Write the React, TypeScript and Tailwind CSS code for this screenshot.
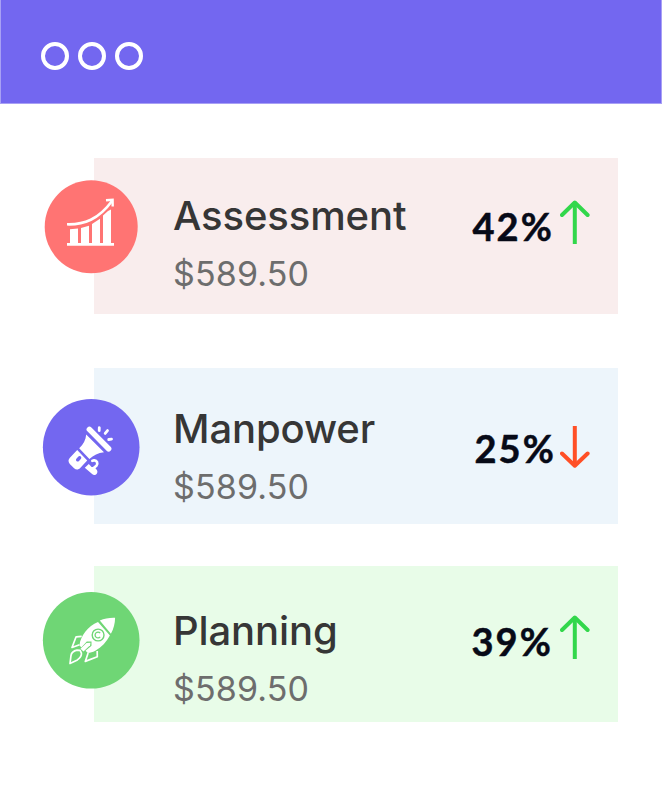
import clsx from 'clsx'
import type { ReactNode } from 'react'

interface Stat {
  name: string
  amount: string
  percent: string
  trend: 'up' | 'down'
  card: string
  body: string
  percentPos: string
  arrowPos: string
  iconPos: string
  icon: ReactNode
}

function ChartIcon() {
  return (
    <svg viewBox="0 0 98 98" className="size-[98px]" fill="none">
      <circle cx="49.2" cy="48.8" r="46.5" fill="#ff7473" />
      <path
        d="M25 65h47v2.8H25zM28 51.2l8-.6V66h-8zM39 50l8-2.3V66h-8zM50 46l8-5.2V66h-8zM61 37.5l5-4.5 3-1.5V66h-8z"
        fill="#fff"
      />
      <path d="M25 46.3C42 46.8 56.5 41.5 70 23" stroke="#fff" strokeWidth="2.6" />
      <path d="M64 22.3l6.6-.6.1 6.7" stroke="#fff" strokeWidth="2.4" />
    </svg>
  )
}

function MegaphoneIcon() {
  return (
    <svg viewBox="0 0 98 98" className="size-[98px]" fill="none">
      <circle cx="49.2" cy="49.2" r="48.3" fill="#7367f0" />
      <path d="M47.4 31.4l19.2 19.4" stroke="#fff" strokeWidth="5.6" strokeLinecap="round" />
      <path
        d="M57.3 29.6l-.1 3M65.5 32.6l-2.3 2.8M66.7 41.5l2.8-.3"
        stroke="#fff"
        strokeWidth="2.8"
        strokeLinecap="round"
      />
      <path d="M44.2 36.6L62 54.2c-6 .5-10.4 3-14.6 6.9L37.2 50.3c4.2-4 6.5-8 7-13.7z" fill="#fff" />
      <path
        fillRule="evenodd"
        d="M35.2 52l10 10.6-7 7.5c-1.8 1.9-4.2 2-6.1.2l-4.3-4.4c-1.8-1.9-1.7-4.3.1-6.1zM34.6 60.4c-1.7 1.7.6 4.3 2.4 2.6l1.8-1.9c1.6-1.7-.8-4.2-2.4-2.5z"
        fill="#fff"
      />
      <path d="M42.8 69.8l4-3.8 2.8 3h2.6l2.1 2.2c3.1 3.3-1 7.7-4.2 4.9z" fill="#fff" />
      <path
        d="M50.4 62.8l1.6-.4c2.8-.4 4.4 3.3 2.4 5.4l-3 2.5"
        stroke="#fff"
        strokeWidth="2.7"
        strokeLinecap="round"
        strokeLinejoin="round"
      />
    </svg>
  )
}

function RocketIcon() {
  return (
    <svg viewBox="0 0 98 98" className="size-[98px]" fill="none">
      <circle cx="49.2" cy="49.3" r="48.3" fill="#6fd675" />
      <path d="M73.1 26.7c-5.5-.2-10.6.6-15.3 2.9l11.1 13.2c2.8-5 4.1-10.4 4.2-16.1z" fill="#fff" />
      <path
        d="M56 31l11.9 13.6c-3.4 6.3-8.2 11.7-14.6 15.2-2.7 1.4-5 2-7.5 2.3l-2.3-2.3 6-5.1V50.600h-4.700l-5.500 6-1.800-2.400c.8-8.800 8.500-19.200 18.500-23.200z"
        fill="#fff"
      />
      <path d="M48.5 51.7l-.4 2.6-6.6 6.2-3-2.8 6-5.7z" fill="#fff" />
      <circle cx="56.1" cy="44" r="5.9" stroke="#6fd675" strokeWidth="1.4" />
      <path d="M58.2 42.1a2.9 2.9 0 1 0 0 3.8" stroke="#6fd675" strokeWidth="1.3" />
      <path
        d="M39.7 45.3l-5.6.5-4.1 10.7 7.5-2.8M55.2 60l.1 5.8-12 4.6 2.8-8.4M35 59.2c-3.6.8-5.6 2.7-6 5.3l-1 8 7.4-3.6c2.6-1.8 4.3-4.2 4-6.8l-1.3-2.7z"
        stroke="#fff"
        strokeWidth="1.7"
        strokeLinejoin="round"
      />
    </svg>
  )
}

function TrendArrow({ trend }: { trend: 'up' | 'down' }) {
  return trend === 'up' ? (
    <svg viewBox="0 0 30 44" className="h-[44px] w-[30px]" fill="none" stroke="#32d74b" strokeWidth="4">
      <path d="M14.8 44V3" />
      <path d="M2 15L14.8 2.5 27.6 15" strokeLinecap="round" strokeLinejoin="round" />
    </svg>
  ) : (
    <svg viewBox="0 0 30 44" className="h-[44px] w-[30px]" fill="none" stroke="#ff4f26" strokeWidth="4">
      <path d="M14.8 0v40" />
      <path d="M2 27.5L14.8 39.7 27.6 27.5" strokeLinecap="round" strokeLinejoin="round" />
    </svg>
  )
}

const stats: Stat[] = [
  {
    name: 'Assessment',
    amount: '$589.50',
    percent: '42%',
    trend: 'up',
    card: 'mt-[54px] bg-[#f9eded]',
    body: 'pt-[34px]',
    percentPos: 'pt-[44px] pr-[6px]',
    arrowPos: 'mt-[42px]',
    iconPos: 'top-[20px]',
    icon: <ChartIcon />,
  },
  {
    name: 'Manpower',
    amount: '$589.50',
    percent: '25%',
    trend: 'down',
    card: 'mt-[54px] bg-[#edf5fb]',
    body: 'pt-[37px]',
    percentPos: 'pt-[56px] pr-[4px]',
    arrowPos: 'mt-[58px]',
    iconPos: 'top-[30px]',
    icon: <MegaphoneIcon />,
  },
  {
    name: 'Planning',
    amount: '$589.50',
    percent: '39%',
    trend: 'up',
    card: 'mt-[42px] bg-[#e8fce8]',
    body: 'pt-[41px]',
    percentPos: 'pt-[51px] pr-[7px]',
    arrowPos: 'mt-[49px]',
    iconPos: 'top-[25px]',
    icon: <RocketIcon />,
  },
]

function StatCard({ stat }: { stat: Stat }) {
  return (
    <section className={clsx('relative ml-[94px] flex h-[156px] w-[524px] pr-7', stat.card)}>
      <div className={clsx('absolute -left-[52px]', stat.iconPos)}>{stat.icon}</div>
      <div className={clsx('flex-1 pl-[79px]', stat.body)}>
        <h2 className="text-[40px] leading-[48px] font-medium tracking-[-0.12px] text-[#363636]">{stat.name}</h2>
        <p className="mt-[14px] text-[34px] leading-[40px] tracking-[0.15px] text-[#6d6d6d]">{stat.amount}</p>
      </div>
      <div
        className={clsx(
          "font-['Lato','Liberation_Sans',sans-serif] text-[38px] leading-[48px] font-bold tracking-[2.1px] text-[#070a17] [-webkit-text-stroke:0.5px_#070a17]",
          stat.percentPos,
        )}
      >
        {stat.percent}
      </div>
      <div className={stat.arrowPos}>
        <TrendArrow trend={stat.trend} />
      </div>
    </section>
  )
}

export default function App() {
  return (
    <div className="h-[796px] w-[662px] overflow-hidden bg-white font-['Inter','Liberation_Sans',sans-serif]">
      <header className="flex h-[104px] items-center gap-[9px] border-x border-b border-[#a8a0f5] bg-[#7367f0] pt-[8px] pl-[40px]">
        {[0, 1, 2].map((i) => (
          <span key={i} className="size-[28px] rounded-full border-4 border-white" />
        ))}
      </header>
      <main>
        {stats.map((s) => (
          <StatCard key={s.name} stat={s} />
        ))}
      </main>
    </div>
  )
}
